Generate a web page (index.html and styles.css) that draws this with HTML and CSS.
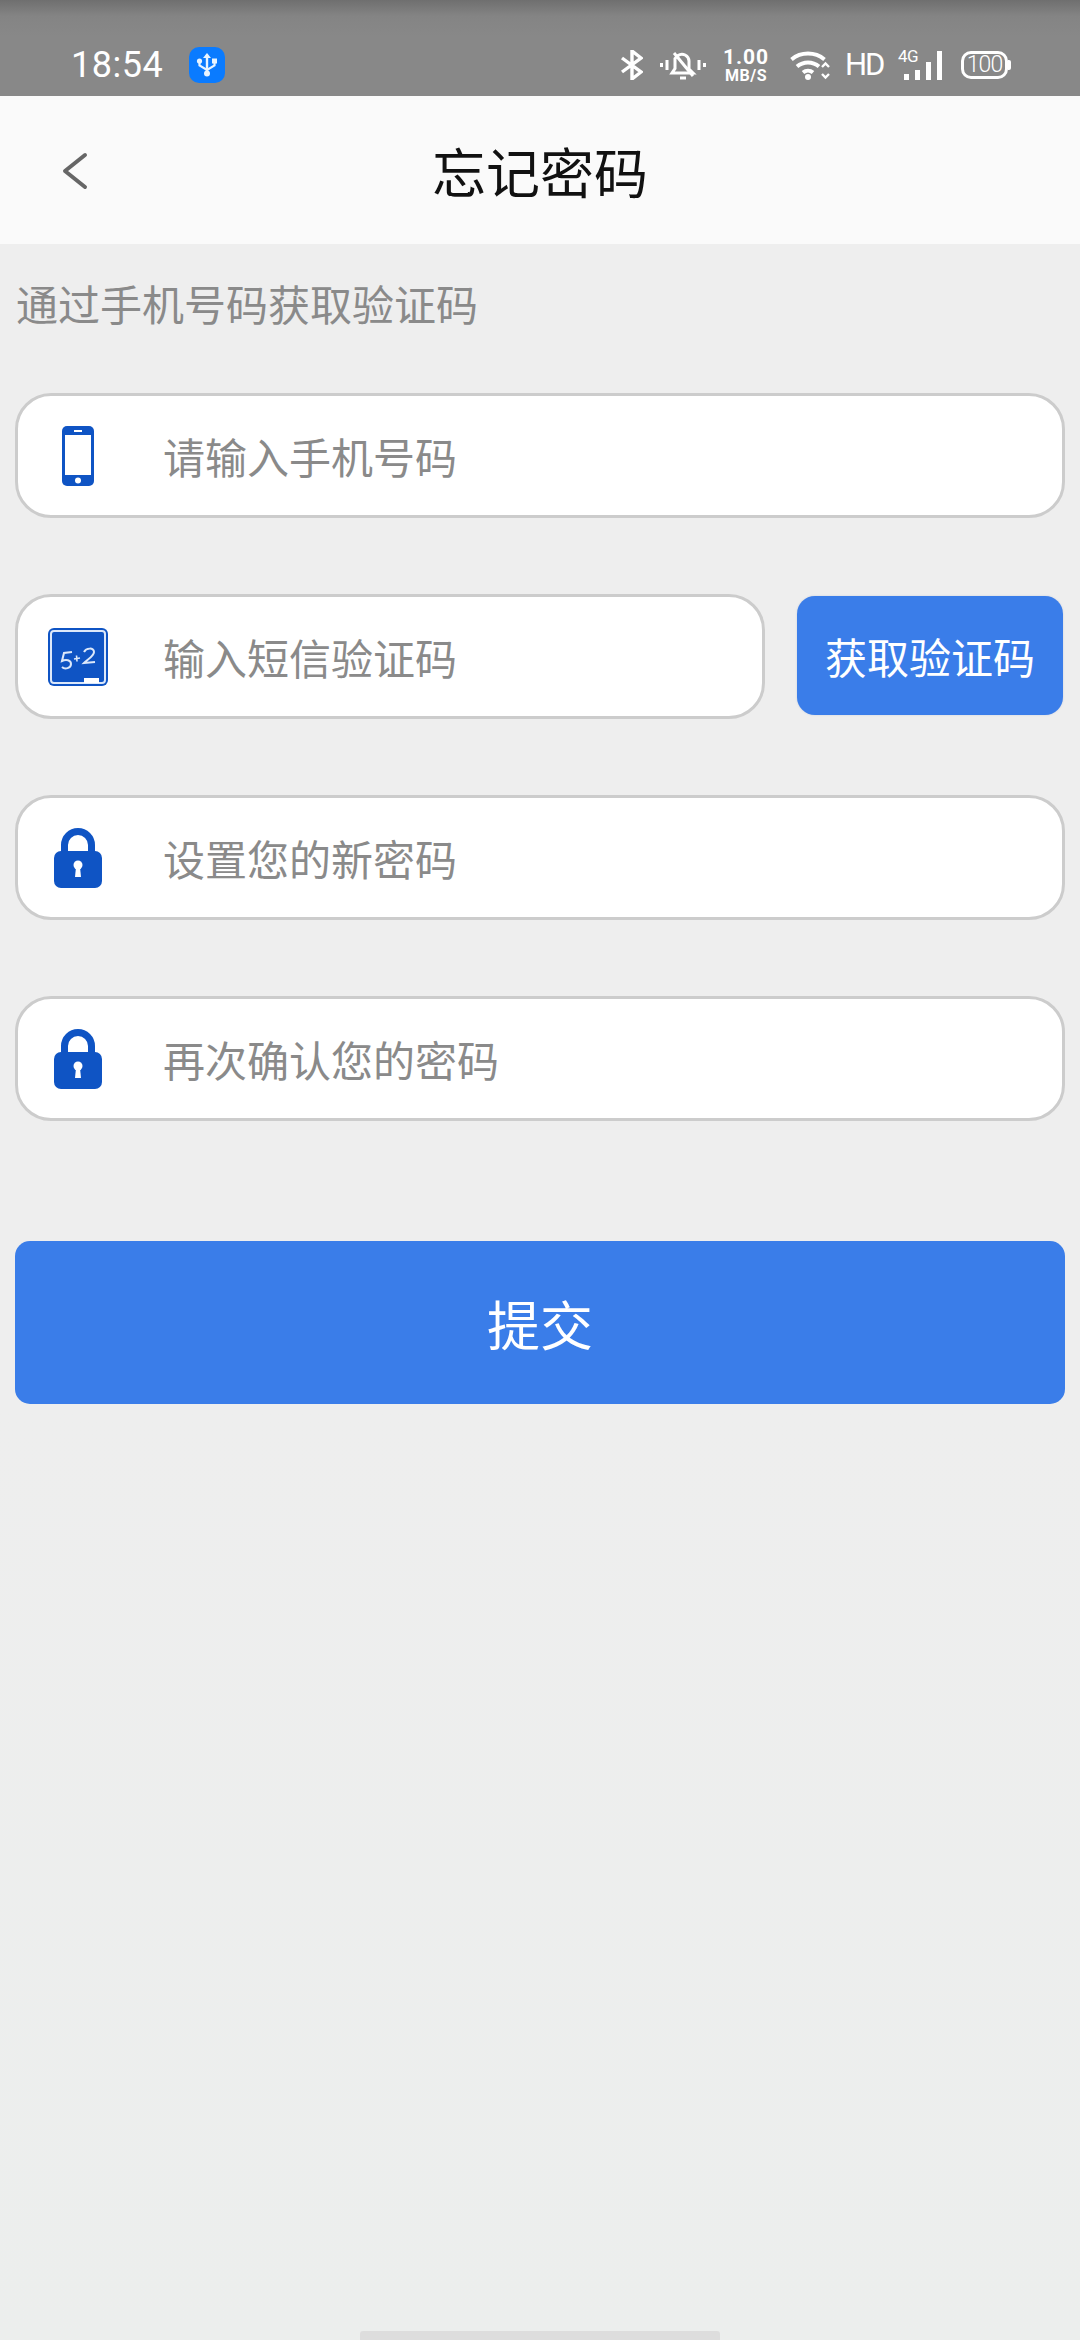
FILE: index.html
```html
<!DOCTYPE html>
<html lang="zh-CN">
<head>
    <meta charset="UTF-8">
    <meta name="viewport" content="width=device-width, initial-scale=1.0">
    <title>忘记密码</title>
    <link rel="stylesheet" href="styles.css">
</head>
<body>
    <div class="status-bar">
        <div class="status-left">
            <span class="clock">18:54</span>
            <span class="usb-badge">
                <svg width="22" height="24" viewBox="0 0 22 24" fill="none">
                    <path d="M11 2v19" stroke="#e8f4ff" stroke-width="2.4"/>
                    <path d="M11 0l4 5H7z" fill="#e8f4ff"/>
                    <circle cx="11" cy="20.5" r="3" fill="#e8f4ff"/>
                    <path d="M3.5 9v3.5l7.5 4.5 7.5-4.5V8" stroke="#e8f4ff" stroke-width="2.2"/>
                    <circle cx="3.5" cy="8" r="2.6" fill="#e8f4ff"/>
                    <rect x="16" y="5.5" width="5" height="5" fill="#e8f4ff"/>
                </svg>
            </span>
        </div>
        <div class="status-right">
            <svg class="ic-bt" width="23" height="30" viewBox="0 0 23 30" fill="none" stroke="#fff" stroke-width="3.4">
                <path d="M2 8l19 14-9 7V1l9 7L2 22"/>
            </svg>
            <svg class="ic-bell" width="46" height="32" viewBox="0 0 46 32" fill="none" stroke="#fff" stroke-width="3">
                <path d="M12 24h21l-4-4v-8a7 7 0 0 0-11-5.500l-3 3v10z"/>
                <path d="M14 4l19 23"/>
                <path d="M20 29h6"/>
                <path d="M1.5 14v4M7 11v10M39 11v10M44.500 14v4"/>
            </svg>
            <div class="speed">
                <span class="speed-num">1.00</span>
                <span class="speed-unit">MB/S</span>
            </div>
            <svg class="ic-wifi" width="40" height="30" viewBox="0 0 40 30" fill="none" stroke="#fff" stroke-width="4">
                <path d="M1.500 9.500a26 26 0 0 1 33 0"/>
                <path d="M7 16.500a17 17 0 0 1 22 0"/>
                <path d="M13 22.500a8 8 0 0 1 10 0"/>
                <circle cx="18" cy="27" r="3" fill="#fff" stroke="none"/>
                <path d="M32 17l3.500-3.500L39 17M32 24l3.500 3.500L39 24" stroke-width="2.400"/>
            </svg>
            <span class="hd">HD</span>
            <div class="signal">
                <span class="signal-type">4G</span>
                <span class="bar bar-1"></span>
                <span class="bar bar-2"></span>
                <span class="bar bar-3"></span>
                <span class="bar bar-4"></span>
            </div>
            <div class="battery">
                <span class="battery-box">100</span>
                <span class="battery-tip"></span>
            </div>
        </div>
    </div>

    <div class="nav-bar">
        <svg class="back-icon" width="26" height="38" viewBox="0 0 26 38" fill="none" stroke="#666" stroke-width="4" stroke-linecap="round" stroke-linejoin="round">
            <path d="M23 3L3 19l20 16"/>
        </svg>
        <h1 class="nav-title">忘记密码</h1>
    </div>

    <div class="content">
        <p class="hint">通过手机号码获取验证码</p>

        <div class="field">
            <span class="field-icon">
                <svg width="32" height="60" viewBox="0 0 32 60">
                    <rect width="32" height="60" rx="5" fill="#0f54c4"/>
                    <rect x="3" y="9" width="26" height="40" fill="#fff"/>
                    <rect x="12" y="4" width="8" height="2" fill="#fff"/>
                    <circle cx="16" cy="54.5" r="3" fill="#fff"/>
                </svg>
            </span>
            <span class="placeholder">请输入手机号码</span>
        </div>

        <div class="code-row">
            <div class="field code-field">
                <span class="field-icon">
                    <svg width="60" height="58" viewBox="0 0 60 58">
                        <rect width="60" height="58" rx="6" fill="#0f54c4"/>
                        <rect x="3" y="3" width="54" height="52" rx="3" fill="none" stroke="#dce8fa" stroke-width="2"/>
                        <path d="M24 24l-8 1-2 8c4-2 9-1 9 3s-6 6-9 3" fill="none" stroke="#dce8fa" stroke-width="2"/>
                        <path d="M26 31l6-1M28.500 27.500l.5 6" stroke="#dce8fa" stroke-width="1.600"/>
                        <path d="M36 24c2-4 10-5 10 0 0 4-6 7-10 11l11-1" fill="none" stroke="#dce8fa" stroke-width="2"/>
                        <rect x="36" y="50" width="15" height="5" fill="#fff"/>
                    </svg>
                </span>
                <span class="placeholder">输入短信验证码</span>
            </div>
            <div class="code-btn">获取验证码</div>
        </div>

        <div class="field">
            <span class="field-icon">
                <svg width="48" height="60" viewBox="0 0 48 60">
                    <path d="M10.5 28V17a13.500 13.500 0 0 1 27 0v11" fill="none" stroke="#0f54c4" stroke-width="7"/>
                    <rect y="23" width="48" height="37" rx="7" fill="#0f54c4"/>
                    <circle cx="24" cy="37" r="4.500" fill="#fff"/>
                    <path d="M22 39h4l1 10h-6z" fill="#fff"/>
                </svg>
            </span>
            <span class="placeholder">设置您的新密码</span>
        </div>

        <div class="field">
            <span class="field-icon">
                <svg width="48" height="60" viewBox="0 0 48 60">
                    <path d="M10.5 28V17a13.500 13.500 0 0 1 27 0v11" fill="none" stroke="#0f54c4" stroke-width="7"/>
                    <rect y="23" width="48" height="37" rx="7" fill="#0f54c4"/>
                    <circle cx="24" cy="37" r="4.500" fill="#fff"/>
                    <path d="M22 39h4l1 10h-6z" fill="#fff"/>
                </svg>
            </span>
            <span class="placeholder">再次确认您的密码</span>
        </div>

        <div class="submit-btn">提交</div>
    </div>

    <div class="home-indicator"></div>
</body>
</html>
```

FILE: styles.css
```css
* {
    box-sizing: border-box;
}

html, body {
    height: 100%;
    overflow: hidden;
}

body {
    margin: 0;
    display: flex;
    flex-direction: column;
    background-color: #eeeeee;
    background-image: linear-gradient(#eeeeee 60%, #eceeed);
    font-family: "Noto Sans CJK SC", "Noto Sans", sans-serif;
}

.status-bar {
    height: 96px;
    padding: 34px 69px 0 71px;
    display: flex;
    align-items: center;
    justify-content: space-between;
    background: linear-gradient(#6f6f6f, #848484 16px, #888888 36px);
    color: #fff;
    font-family: Roboto, sans-serif;
}

.status-left {
    display: flex;
    align-items: center;
    gap: 26px;
}

.clock {
    font-size: 36px;
    letter-spacing: 0.5px;
    line-height: 40px;
}

.usb-badge {
    width: 36px;
    height: 36px;
    display: flex;
    align-items: center;
    justify-content: center;
    background-color: #0a7bff;
    border-radius: 10px;
}

.status-right {
    display: flex;
    align-items: center;
}

.ic-bt {
    margin-right: 17px;
}

.ic-bell {
    margin-right: 16px;
}

.speed {
    width: 48px;
    margin-right: 20px;
    display: flex;
    flex-direction: column;
    align-items: center;
    font-weight: 700;
}

.speed-num {
    font-size: 21px;
    line-height: 20px;
    letter-spacing: 1px;
}

.speed-unit {
    font-size: 16px;
    line-height: 17px;
    letter-spacing: 0.5px;
}

.ic-wifi {
    margin-right: 15px;
}

.hd {
    width: 35px;
    margin-right: 18px;
    font-size: 31px;
    line-height: 34px;
    letter-spacing: -2px;
    white-space: nowrap;
}

.signal {
    position: relative;
    width: 44px;
    height: 30px;
    margin-right: 19px;
    display: flex;
    align-items: flex-end;
    justify-content: flex-end;
    gap: 6px;
}

.signal-type {
    position: absolute;
    left: 0;
    top: -3px;
    font-size: 17px;
    line-height: 18px;
    letter-spacing: -0.5px;
}

.bar {
    width: 5px;
    background-color: #fff;
}

.bar-1 {
    height: 6px;
}

.bar-2 {
    height: 10px;
}

.bar-3 {
    height: 18px;
}

.bar-4 {
    height: 29px;
}

.battery {
    display: flex;
    align-items: center;
}

.battery-box {
    width: 47px;
    height: 28px;
    border: 3px solid #fff;
    border-radius: 10px;
    font-size: 23px;
    line-height: 22px;
    text-align: center;
    font-weight: 300;
    letter-spacing: -1px;
}

.battery-tip {
    width: 3px;
    height: 10px;
    background-color: #fff;
    border-radius: 0 2px 2px 0;
}

.nav-bar {
    position: relative;
    height: 148px;
    display: flex;
    align-items: center;
    justify-content: center;
    background-color: #fafafa;
}

.back-icon {
    position: absolute;
    left: 62px;
    top: 56px;
}

.nav-title {
    margin: 0;
    font-size: 54px;
    font-weight: 400;
    color: #111;
    line-height: 70px;
    position: relative;
    top: 1px;
}

.content {
    flex: 1;
    padding: 29px 15px 0;
}

.hint {
    margin: 0 0 60px;
    padding-left: 1px;
    font-size: 42px;
    line-height: 60px;
    color: #8a8a8a;
}

.field {
    height: 125px;
    display: flex;
    align-items: center;
    margin-bottom: 76px;
    background-color: #fff;
    border: 3px solid #cccccc;
    border-radius: 36px;
}

.field-icon {
    width: 120px;
    display: flex;
    justify-content: center;
    margin-right: 25px;
}

.placeholder {
    font-size: 42px;
    color: #8a8a8a;
}

.code-row {
    display: flex;
    align-items: flex-start;
    justify-content: space-between;
}

.code-field {
    width: 750px;
}

.code-btn {
    width: 266px;
    height: 119px;
    margin: 2px 2px 0 0;
    display: flex;
    align-items: center;
    justify-content: center;
    background-color: #3a7de9;
    border-radius: 18px;
    box-shadow: 0 0 2px #c4ccdc;
    font-size: 42px;
    color: #fff;
}

.submit-btn {
    height: 163px;
    margin-top: 120px;
    display: flex;
    align-items: center;
    justify-content: center;
    background-color: #3a7de9;
    border-radius: 15px;
    font-size: 53px;
    color: #fff;
}

.home-indicator {
    position: absolute;
    left: 360px;
    bottom: 0;
    width: 360px;
    height: 9px;
    background-color: #dddddd;
    border-radius: 3px 3px 0 0;
}
```
